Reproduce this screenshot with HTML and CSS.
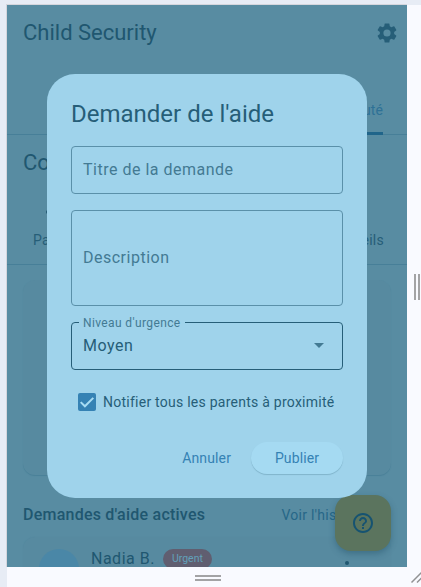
FILE: index.html
```html
<!DOCTYPE html>
<html lang="fr">
<head>
<meta charset="utf-8">
<title>Child Security</title>
<link rel="stylesheet" href="styles.css">
</head>
<body>
<div class="stage">
  <main class="screen">
    <header class="appbar">
      <h1>Child Security</h1>
      <svg class="gear" viewBox="0 0 24 24"><path d="M19.14 12.94c.04-.3.06-.61.06-.94 0-.32-.02-.64-.07-.94l2.03-1.58a.49.49 0 0 0 .12-.61l-1.92-3.32a.49.49 0 0 0-.59-.22l-2.39.96a7 7 0 0 0-1.62-.94l-.36-2.54a.48.48 0 0 0-.48-.41h-3.84a.47.47 0 0 0-.47.41l-.36 2.54c-.59.24-1.13.57-1.62.94l-2.39-.96a.48.48 0 0 0-.59.22L2.74 8.87a.48.48 0 0 0 .12.61l2.03 1.58c-.05.3-.09.63-.09.94s.02.64.07.94l-2.03 1.58a.49.49 0 0 0-.12.61l1.92 3.32c.12.22.37.29.59.22l2.39-.96c.5.38 1.03.7 1.62.94l.36 2.54c.05.24.24.41.48.41h3.84c.24 0 .44-.17.47-.41l.36-2.54a6.6 6.6 0 0 0 1.62-.94l2.39.96c.22.08.47 0 .59-.22l1.92-3.32a.47.47 0 0 0-.12-.61zM12 15.6A3.6 3.6 0 1 1 12 8.4a3.6 3.6 0 0 1 0 7.2z"/></svg>
    </header>
    <nav class="tabs"><span class="tab">Communauté</span></nav>
    <h2 class="heading">Communauté</h2>
    <nav class="subtabs"><span class="subtab"><i class="speck"></i>Parents</span><span>Conseils</span></nav>
    <section class="card"></section>
    <div class="row">
      <h3>Demandes d'aide actives</h3>
      <span class="history">Voir l'historique</span>
    </div>
    <article class="card person">
      <span class="avatar"></span>
      <span class="name">Nadia B.</span>
      <span class="badge">Urgent</span>
      <span class="more"></span>
    </article>

    <div class="fab">
      <svg viewBox="0 0 24 24"><path d="M11 18h2v-2h-2v2zm1-16C6.48 2 2 6.48 2 12s4.48 10 10 10 10-4.48 10-10S17.52 2 12 2zm0 18c-4.41 0-8-3.59-8-8s3.59-8 8-8 8 3.59 8 8-3.59 8-8 8zm0-14c-2.21 0-4 1.79-4 4h2c0-1.1.9-2 2-2s2 .9 2 2c0 2-3 1.75-3 5h2c0-2.25 3-2.5 3-5 0-2.21-1.79-4-4-4z"/></svg>
    </div>

    <section class="dialog">
      <h2>Demander de l'aide</h2>
      <div class="field">Titre de la demande</div>
      <div class="field area">Description</div>
      <div class="field select">
        <span class="label">Niveau d'urgence</span>
        <span>Moyen</span>
        <svg class="arrow" viewBox="0 0 10 5"><path d="M0 0h10L5 5z"/></svg>
      </div>
      <div class="check">
        <svg viewBox="0 0 18 18"><rect width="18" height="18" rx="2"/><path d="M2.7 9.1l4.2 4.2 8.4-8.4"/></svg>
        <span>Notifier tous les parents à proximité</span>
      </div>
      <div class="actions">
        <span class="cancel">Annuler</span>
        <span class="publish">Publier</span>
      </div>
    </section>
  </main>
  <aside class="grip-side"><i></i><i></i></aside>
  <footer class="grip-bottom"><i></i><i></i></footer>
  <svg class="corner" viewBox="0 0 14 20"><path d="M4.5 15.5L15 5M10 15.5L15 10.5"/></svg>
</div>
</body>
</html>
```
FILE: styles.css
```css
* { box-sizing: border-box; }
body {
  margin: 0;
  padding: 5px 0 0 7px;
  height: 587px;
  overflow: hidden;
  background: #e7ecf5;
  font-family: Roboto, sans-serif;
  color: #265e78;
}
h1, h2, h3 { margin: 0; font-weight: 400; }
.stage {
  display: grid;
  grid-template-columns: 400px 14px;
  grid-template-rows: 562px 20px;
  background: #f9faff;
}
.screen {
  position: relative;
  overflow: hidden;
  background: #588ca2;
  box-shadow: 0 0 0 1px #d5d6dd;
  clip-path: inset(-1px 0 0 -1px);
}
.appbar {
  height: 56px;
  padding: 0 8px 0 16px;
  display: flex;
  align-items: center;
  justify-content: space-between;
}
.appbar h1 { font-size: 22px; line-height: 28px; color: #205770; }
.gear { width: 24px; height: 24px; fill: #265e78; }
.tabs {
  height: 74px;
  padding: 26px 24px 0;
  border-bottom: 1px solid #477f98;
  display: flex;
  justify-content: flex-end;
}
.tab {
  height: 48px;
  padding-top: 13px;
  font-size: 14px;
  letter-spacing: .1px;
  line-height: 20px;
  color: #2e7196;
  border-bottom: 3px solid #20658a;
  border-radius: 0 3px 0 0;
}
.heading { height: 56px; padding: 14px 16px 0; font-size: 22px; line-height: 28px; color: #205770; }
.subtabs {
  height: 74px;
  padding: 39px 23px 0 26px;
  display: flex;
  justify-content: space-between;
  font-size: 14px;
  line-height: 20px;
  letter-spacing: .25px;
  border-bottom: 1px solid #477f98;
}
.subtab { position: relative; }
.speck { position: absolute; left: 13px; top: -20px; width: 4px; height: 4px; border-radius: 50%; background: #205770; }
.card {
  height: 195px;
  margin: 15px 16px 0;
  border-radius: 12px;
  background: #578aa0;
  box-shadow: 0 1px 1px #4a8098;
}
.row {
  height: 62px;
  padding: 20px 16px 0;
  display: flex;
  justify-content: space-between;
}
.row h3 { font-size: 16px; font-weight: 500; line-height: 40px; letter-spacing: .23px; color: #205770; }
.history { width: 109.5px; white-space: nowrap; font-size: 14px; line-height: 40px; letter-spacing: .25px; color: #266788; }
.person {
  height: 80px;
  margin-top: 0;
  padding: 12px 16px;
  display: flex;
  align-items: flex-start;
  box-shadow: 0 0 1px #4f859c;
}
.avatar { width: 40px; height: 40px; border-radius: 50%; background: #4a87a7; }
.name { margin-left: 12px; font-size: 16px; line-height: 20px; letter-spacing: .5px; color: #205770; }
.badge {
  margin-left: 8px;
  width: 49px;
  height: 20px;
  border-radius: 10px;
  background: #605e70;
  color: #62a0b9;
  font-size: 10.5px;
  line-height: 20px;
  text-align: center;
}
.more { margin: 12px 26px 0 auto; width: 4px; height: 4px; border-radius: 50%; background: #205770; }
.fab {
  position: absolute;
  right: 16px;
  bottom: 16px;
  width: 56px;
  height: 56px;
  padding: 16px;
  border-radius: 16px;
  background: #5b745e;
  box-shadow: 0 3px 6px rgba(20, 65, 90, .35);
}
.fab svg { display: block; width: 24px; height: 24px; fill: #165371; }
.dialog {
  position: absolute;
  left: 40px;
  top: 69px;
  width: 320px;
  height: 424px;
  padding: 24px;
  border-radius: 28px;
  background: #9fd3eb;
}
.dialog h2 { font-size: 24px; line-height: 32px; margin-bottom: 16px; }
.field {
  position: relative;
  height: 48px;
  margin-bottom: 16px;
  padding: 0 12px 1px 11px;
  display: flex;
  align-items: center;
  justify-content: space-between;
  border: 1px solid #5a90a9;
  border-radius: 4px;
  font-size: 16px;
  letter-spacing: .5px;
  color: #437a93;
}
.area { height: 96px; }
.select { border-color: #265e78; color: #265e78; }
.label {
  position: absolute;
  left: 7px;
  top: -7px;
  padding: 0 4px;
  background: #9fd3eb;
  font-size: 12px;
  letter-spacing: .38px;
  line-height: 14px;
  color: #437a93;
}
.arrow { width: 10px; height: 5px; margin-right: 6px; fill: #437a93; }
.check {
  height: 32px;
  padding-left: 7px;
  display: flex;
  align-items: center;
  gap: 7px;
  font-size: 14px;
  letter-spacing: .25px;
  white-space: nowrap;
}
.check svg { width: 18px; height: 18px; fill: #3582b4; }
.check path { fill: none; stroke: #a7dcf3; stroke-width: 2; }
.actions {
  margin-top: 24px;
  display: flex;
  justify-content: flex-end;
  align-items: center;
  gap: 20px;
  font-size: 14px;
  letter-spacing: .12px;
  color: #3582b4;
}
.publish {
  width: 92px;
  height: 32px;
  line-height: 32px;
  text-align: center;
  border-radius: 16px;
  background: #a5daf2;
  box-shadow: 0 1px 1px #80b4cb;
}
.grip-side { display: flex; align-items: center; gap: 2px; padding-left: 7px; }
.grip-side i { width: 2px; height: 26px; margin-top: 2px; background: #a3a3a5; }
.grip-bottom { display: flex; flex-direction: column; align-items: center; gap: 2px; padding: 8px 0 0 2px; }
.grip-bottom i { width: 26px; height: 2px; background: #a3a3a5; }
.corner { width: 14px; height: 20px; }
.corner path { fill: none; stroke: #929294; stroke-width: 1.5; }
```
